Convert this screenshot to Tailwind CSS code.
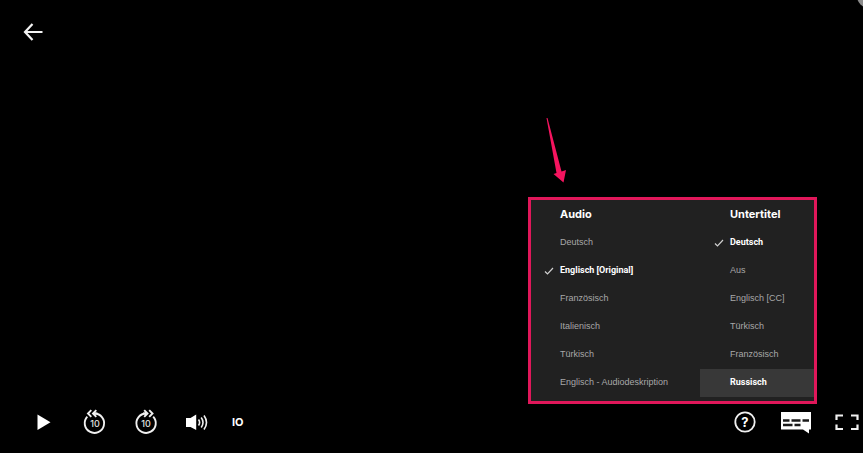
<!DOCTYPE html>
<html lang="de">
<head>
    <meta charset="UTF-8">
    <meta name="viewport" content="width=device-width, initial-scale=1.0">
    <title>Audio und Untertitel</title>
    <script src="https://cdn.jsdelivr.net/npm/@tailwindcss/browser@4"></script>
</head>
<body class="bg-white font-['Inter','Liberation_Sans',sans-serif] text-white">
    <div class="flex min-h-screen flex-col pb-1">
        <main class="relative flex flex-1 flex-col justify-between overflow-hidden bg-black">
            <!-- Top bar -->
            <header class="flex px-5 pt-5">
                <button type="button" aria-label="Zurück" class="flex h-6 w-6 items-center justify-center">
                    <svg class="h-6 w-6" viewBox="0 0 24 24" fill="none" stroke="#f2f2f2" stroke-width="2.200">
                        <path d="M22.500 12H5M12.500 4L5 12l7.500 8"/>
                    </svg>
                </button>
            </header>
            <span class="absolute -top-4 -right-[18px] h-6 w-6 rounded-full bg-[#8c8c8c]"></span>

            <!-- Audio / subtitle menu -->
            <div class="absolute right-[46px] bottom-[49px] w-[289px]">
                <svg class="absolute -top-20 left-4 h-[66px] w-6" viewBox="0 0 24 66" fill="#f5145f">
                    <path d="M2.500 1L3.500 1L17.500 54.500L22 53L19.500 65.500L9.500 57L12.500 56Z"/>
                </svg>
                <div class="flex border-3 border-[#e0175a] bg-[#212121] pb-1">
                    <section class="flex-1">
                        <h2 class="pt-1.5 pb-[7px] pl-[29px] text-[11px] leading-4 font-bold">Audio</h2>
                        <ul class="font-['Liberation_Sans',sans-serif] text-[9px] text-[#a8a8a8]">
                            <li><button type="button" class="flex h-7 w-full items-center pl-[29px]">Deutsch</button></li>
                            <li>
                                <button type="button" aria-pressed="true" class="flex h-7 w-full items-center pl-3 font-['Roboto',sans-serif] font-bold text-white">
                                    <svg class="mr-1 h-3 w-[13px]" viewBox="0 0 13 12" fill="none" stroke="#d0d0d0" stroke-width="1.200"><path d="M2 6.500l2.500 2.500L10 3"/></svg>
                                    Englisch [Original]
                                </button>
                            </li>
                            <li><button type="button" class="flex h-7 w-full items-center pl-[29px]">Französisch</button></li>
                            <li><button type="button" class="flex h-7 w-full items-center pl-[29px]">Italienisch</button></li>
                            <li><button type="button" class="flex h-7 w-full items-center pl-[29px]">Türkisch</button></li>
                            <li><button type="button" class="flex h-7 w-full items-center pl-[29px]">Englisch - Audiodeskription</button></li>
                        </ul>
                    </section>
                    <section class="w-[114px]">
                        <h2 class="pt-1.5 pb-[7px] pl-[30px] text-[11px] leading-4 font-bold">Untertitel</h2>
                        <ul class="font-['Liberation_Sans',sans-serif] text-[9px] text-[#a8a8a8]">
                            <li>
                                <button type="button" aria-pressed="true" class="flex h-7 w-full items-center pl-[13px] font-['Roboto',sans-serif] font-bold text-white">
                                    <svg class="mr-1 h-3 w-[13px]" viewBox="0 0 13 12" fill="none" stroke="#d0d0d0" stroke-width="1.200"><path d="M2 6.500l2.500 2.500L10 3"/></svg>
                                    Deutsch
                                </button>
                            </li>
                            <li><button type="button" class="flex h-7 w-full items-center pl-[30px]">Aus</button></li>
                            <li><button type="button" class="flex h-7 w-full items-center pl-[30px]">Englisch [CC]</button></li>
                            <li><button type="button" class="flex h-7 w-full items-center pl-[30px]">Türkisch</button></li>
                            <li><button type="button" class="flex h-7 w-full items-center pl-[30px]">Französisch</button></li>
                            <li><button type="button" class="flex h-7 w-full items-center bg-[#383838] pl-[30px] font-['Roboto',sans-serif] font-bold text-white">Russisch</button></li>
                        </ul>
                    </section>
                </div>
            </div>

            <!-- Player controls -->
            <footer class="flex h-[62px] items-center justify-between pr-1 pl-8">
                <div class="flex items-center gap-[27px]">
                    <button type="button" aria-label="Abspielen">
                        <svg class="h-6 w-6" viewBox="0 0 24 24" fill="#fff"><path d="M5.500 4.500v15.500L18.500 12.300z"/></svg>
                    </button>
                    <button type="button" aria-label="10 Sekunden zurück" class="relative flex h-6 w-6 items-center justify-center">
                        <svg class="absolute inset-0 h-6 w-6 overflow-visible" viewBox="0 0 24 24" fill="none" stroke="#f0f0f0" stroke-width="1.900">
                            <path d="M4.300 6.600A9.700 9.700 0 1 0 11.500 3.500"/>
                            <path d="M11.500 3.500h3M8.300 .2L5 3.500L8.300 6.800M13.300 .2L10 3.500L13.300 6.800"/>
                        </svg>
                        <span class="pt-1 text-[9px] leading-3 font-medium text-[#e0e0e0]">10</span>
                    </button>
                    <button type="button" aria-label="10 Sekunden vor" class="relative flex h-6 w-6 items-center justify-center">
                        <svg class="absolute inset-0 h-6 w-6 overflow-visible" viewBox="0 0 24 24" fill="none" stroke="#f0f0f0" stroke-width="1.900">
                            <path d="M19.200 6.600A9.700 9.700 0 1 1 12 3.500"/>
                            <path d="M12 3.500H9M15.200 .2l3.300 3.300L15.200 6.800M10.200 .2l3.300 3.300L10.200 6.800"/>
                        </svg>
                        <span class="pt-1 text-[9px] leading-3 font-medium text-[#e0e0e0]">10</span>
                    </button>
                    <button type="button" aria-label="Lautstärke">
                        <svg class="h-6 w-6" viewBox="0 0 24 24" fill="none" stroke="#f0f0f0" stroke-width="1.600">
                            <path d="M1 8h4.500L11.200 4.500v15.500L5.500 17H1z" fill="#fff" stroke="none"/>
                            <path d="M13.500 9.500q2.200 3 0 6M16.200 7.500q3.600 5 0 10M19 5.500q5 7 0 14"/>
                        </svg>
                    </button>
                    <h1 class="-ml-1 text-[11px] leading-4 font-bold">IO</h1>
                </div>
                <div class="flex items-center gap-6">
                    <button type="button" aria-label="Hilfe" class="relative flex h-6 w-6 items-center justify-center">
                        <svg class="absolute inset-0 h-6 w-6" viewBox="0 0 24 24" fill="none" stroke="#f0f0f0" stroke-width="1.800"><circle cx="12" cy="12" r="9.700"/></svg>
                        <span class="text-[13px] leading-4 font-bold">?</span>
                    </button>
                    <button type="button" aria-label="Audio und Untertitel">
                        <svg class="h-6 w-[30px]" viewBox="0 0 30 24">
                            <path d="M0 2h30v17.500h-2V23.500L22 19.500H0z" fill="#fff"/>
                            <path d="M2 10.500h6.500M10.500 10.500h9M21.500 10.500h6.500M2 15h9.500M13.500 15h6" fill="none" stroke="#1a1a1a" stroke-width="2.600"/>
                        </svg>
                    </button>
                    <button type="button" aria-label="Vollbild">
                        <svg class="h-6 w-6" viewBox="0 0 24 24" fill="none" stroke="#f0f0f0" stroke-width="2.200">
                            <path d="M8 5.500H1.500V10M16 5.500h6.500V10M8 19H1.500v-4.500M16 19h6.500v-4.500"/>
                        </svg>
                    </button>
                </div>
            </footer>
        </main>
    </div>
</body>
</html>
